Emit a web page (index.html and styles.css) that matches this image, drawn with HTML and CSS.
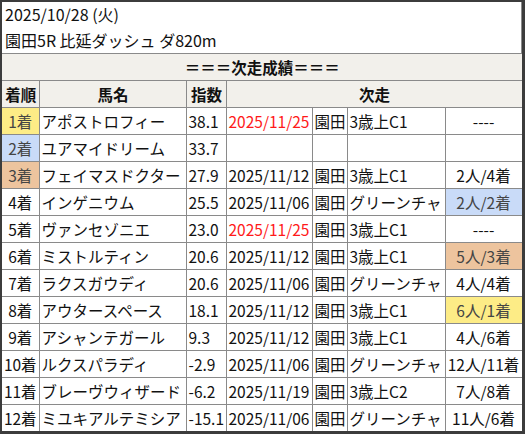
FILE: index.html
```html
<!DOCTYPE html>
<html lang="ja">
<head>
<meta charset="utf-8">
<link rel="stylesheet" href="styles.css">
</head>
<body>
<div class="frame">
  <div class="title">
    <div class="title-line">2025/10/28 (火)</div>
    <div class="title-line">園田5R 比延ダッシュ ダ820m</div>
  </div>
  <table class="results">
    <colgroup>
      <col class="c-rank"><col class="c-name"><col class="c-idx"><col class="c-date"><col class="c-venue"><col class="c-race"><col class="c-res">
    </colgroup>
    <thead>
      <tr class="banner"><th colspan="7">＝＝＝次走成績＝＝＝</th></tr>
      <tr class="head"><th>着順</th><th>馬名</th><th>指数</th><th colspan="4">次走</th></tr>
    </thead>
    <tbody>
      <tr><td class="rank gold">1着</td><td>アポストロフィー</td><td>38.1</td><td class="red">2025/11/25</td><td>園田</td><td>3歳上C1</td><td class="res">----</td></tr>
      <tr><td class="rank silver">2着</td><td>ユアマイドリーム</td><td>33.7</td><td></td><td></td><td></td><td class="res"></td></tr>
      <tr><td class="rank bronze">3着</td><td>フェイマスドクター</td><td>27.9</td><td>2025/11/12</td><td>園田</td><td>3歳上C1</td><td class="res">2人/4着</td></tr>
      <tr><td class="rank">4着</td><td>インゲニウム</td><td>25.5</td><td>2025/11/06</td><td>園田</td><td>グリーンチャ</td><td class="res silver">2人/2着</td></tr>
      <tr><td class="rank">5着</td><td>ヴァンセゾニエ</td><td>23.0</td><td class="red">2025/11/25</td><td>園田</td><td>3歳上C1</td><td class="res">----</td></tr>
      <tr><td class="rank">6着</td><td>ミストルティン</td><td>20.6</td><td>2025/11/12</td><td>園田</td><td>3歳上C1</td><td class="res bronze">5人/3着</td></tr>
      <tr><td class="rank">7着</td><td>ラクスガウディ</td><td>20.6</td><td>2025/11/06</td><td>園田</td><td>グリーンチャ</td><td class="res">4人/4着</td></tr>
      <tr><td class="rank">8着</td><td>アウタースペース</td><td>18.1</td><td>2025/11/12</td><td>園田</td><td>3歳上C1</td><td class="res gold">6人/1着</td></tr>
      <tr><td class="rank">9着</td><td>アシャンテガール</td><td>9.3</td><td>2025/11/12</td><td>園田</td><td>3歳上C1</td><td class="res">4人/6着</td></tr>
      <tr><td class="rank">10着</td><td>ルクスパラディ</td><td>-2.9</td><td>2025/11/06</td><td>園田</td><td>グリーンチャ</td><td class="res">12人/11着</td></tr>
      <tr><td class="rank">11着</td><td>ブレーヴウィザード</td><td>-6.2</td><td>2025/11/19</td><td>園田</td><td>3歳上C2</td><td class="res">7人/8着</td></tr>
      <tr><td class="rank">12着</td><td>ミユキアルテミシア</td><td>-15.1</td><td>2025/11/06</td><td>園田</td><td>グリーンチャ</td><td class="res">11人/6着</td></tr>
    </tbody>
  </table>
</div>
</body>
</html>
```
FILE: styles.css
```css
html, body {
  margin: 0;
  padding: 0;
  background: #ffffff;
}
body {
  font-family: "Noto Sans CJK JP", "Noto Sans", sans-serif;
  font-size: 15.5px;
  color: #111;
}
.frame {
  width: 520px;
  height: 429px;
  border-top: 2px solid #3c3c3c;
  border-left: 2px solid #3c3c3c;
  border-right: 3px solid #3c3c3c;
  border-bottom: 3px solid #3c3c3c;
  overflow: hidden;
  background: #fff;
}
.title {
  height: 51px;
  padding-left: 3px;
  border-right: 1px solid #8a8a8a;
  font-size: 16px;
}
.title-line {
  height: 25.5px;
  line-height: 25.5px;
  white-space: nowrap;
}
.results {
  border-collapse: collapse;
  table-layout: fixed;
  width: 520px;
}
.c-rank { width: 37px; }
.c-name { width: 147px; }
.c-idx { width: 40px; }
.c-date { width: 86px; }
.c-venue { width: 35px; }
.c-race { width: 98px; }
.c-res { width: 77px; }
.results th, .results td {
  border: 1px solid #8a8a8a;
  height: 26px;
  padding: 0 1px 0 2px;
  line-height: 26px;
  white-space: nowrap;
  overflow: hidden;
  text-align: left;
  font-weight: normal;
}
.results tr > :first-child {
  border-left: 0;
}
.results th {
  background: #f2f0eb;
  font-weight: bold;
  text-align: center;
}
.results td.rank {
  text-align: center;
  padding: 0;
}
.results td.res {
  text-align: center;
  padding: 0;
}
.red { color: #ff1a1a; }
.gold { background: #fdec86; color: #444; }
.silver { background: #c9dbf8; color: #444; }
.bronze { background: #edc49e; color: #444; }
```
